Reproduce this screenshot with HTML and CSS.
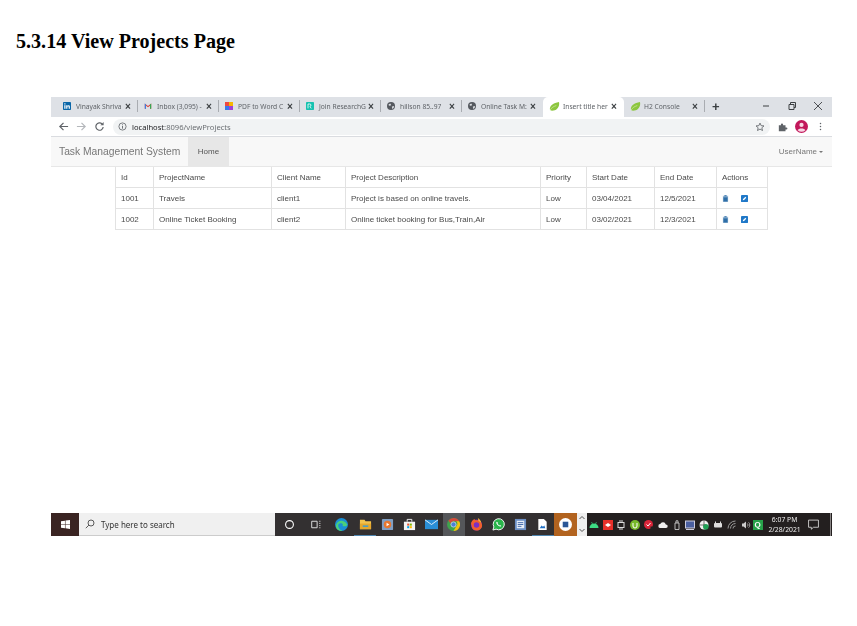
FILE: index.html

```html
<!DOCTYPE html>
<html lang="en">
<head>
  <meta charset="UTF-8" />
  <title>View Projects Page</title>
  <link rel="stylesheet" href="styles.css">
</head>
<body>
  <h1 class="page-title">5.3.14 View Projects Page</h1>

  <div class="shot">
    <div class="tabstrip">
      <div class="tab sep">
        <svg class="fav" viewBox="0 0 10 10"><rect width="10" height="10" rx="1" fill="#0a66a8"/><rect x="1.6" y="4" width="1.5" height="4.5" fill="#fff"/><rect x="1.6" y="1.6" width="1.5" height="1.5" fill="#fff"/><path d="M4 4h1.4v.7c.8-1.1 3.2-1.2 3.2 1.1v2.7H7.100V6.100c0-1.200-1.600-1.100-1.600 0v2.400H4z" fill="#fff"/></svg>
        <span class="tab-text">Vinayak Shriva</span><span class="tab-x">×</span>
      </div>
      <div class="tab sep">
        <svg class="fav" viewBox="0 0 10 10"><path d="M1 8.500V2l4 3 4-3v6.500H7.500V4.800L5 6.700 2.500 4.800v3.700z" fill="#d9423a"/><path d="M1 8.500V2l1.500 1.100v5.400z" fill="#3f7fe0"/><path d="M9 8.500V2L7.500 3.100v5.400z" fill="#35a853"/></svg>
        <span class="tab-text">Inbox (3,095) -</span><span class="tab-x">×</span>
      </div>
      <div class="tab sep">
        <svg class="fav" viewBox="0 0 10 10"><rect width="5" height="5" fill="#f0483e"/><rect x="5" width="5" height="5" fill="#f7b500"/><rect y="5" width="5" height="5" fill="#3b78e7"/><rect x="5" y="5" width="5" height="5" fill="#a23fd6"/></svg>
        <span class="tab-text">PDF to Word C</span><span class="tab-x">×</span>
      </div>
      <div class="tab sep">
        <svg class="fav" viewBox="0 0 10 10"><rect width="10" height="10" rx="1" fill="#16c2b0"/><path d="M2.500 8V2.500h2a1.500 1.500 0 0 1 .4 3L6.500 8" fill="none" stroke="#fff"/></svg>
        <span class="tab-text">Join ResearchG</span><span class="tab-x">×</span>
      </div>
      <div class="tab sep">
        <svg class="fav" viewBox="0 0 10 10"><circle cx="5" cy="5" r="5" fill="#55595f"/><path d="M2 3l2-1 1 1-1 2-2-1zM6 6l2-1 1 1-2 3z" fill="#dee1e6"/></svg>
        <span class="tab-text">hillson 85..97</span><span class="tab-x">×</span>
      </div>
      <div class="tab">
        <svg class="fav" viewBox="0 0 10 10"><circle cx="5" cy="5" r="5" fill="#55595f"/><path d="M2 3l2-1 1 1-1 2-2-1zM6 6l2-1 1 1-2 3z" fill="#dee1e6"/></svg>
        <span class="tab-text">Online Task M:</span><span class="tab-x">×</span>
      </div>
      <div class="tab active">
        <svg class="fav leaf" viewBox="0 0 12 10"><path d="M1 9C0 4 5 1 11 0c1 5-2 9-6 9.500-1.500.2-3 .1-4-.5z" fill="#8cc63f"/><path d="M1 9c2-3 4-4 7-5" stroke="#e8f3c8" stroke-width=".6" fill="none"/></svg>
        <span class="tab-text">Insert title her</span><span class="tab-x">×</span>
      </div>
      <div class="tab sep">
        <svg class="fav leaf" viewBox="0 0 12 10"><path d="M1 9C0 4 5 1 11 0c1 5-2 9-6 9.500-1.500.2-3 .1-4-.5z" fill="#8cc63f"/><path d="M1 9c2-3 4-4 7-5" stroke="#e8f3c8" stroke-width=".6" fill="none"/></svg>
        <span class="tab-text">H2 Console</span><span class="tab-x">×</span>
      </div>
      <span class="new-tab">+</span>
      <div class="win-btns">
        <svg viewBox="0 0 10 10"><path d="M2 5h6" stroke="#3c4043"/></svg>
        <svg viewBox="0 0 10 10"><path d="M2 3.500h5v5H2zM3.500 3.500V1.500h5v5H7" fill="none" stroke="#3c4043"/></svg>
        <svg viewBox="0 0 10 10"><path d="M1 1l8 8M9 1l-8 8" stroke="#3c4043" stroke-width=".9"/></svg>
      </div>
    </div>

    <div class="toolbar">
      <svg class="nav-ico" viewBox="0 0 12 12"><path d="M11 6H2M6 2L2 6l4 4" fill="none" stroke="#5f6368" stroke-width="1.300"/></svg>
      <svg class="nav-ico" viewBox="0 0 12 12"><path d="M1 6h9M6 2l4 4-4 4" fill="none" stroke="#b4b7bb" stroke-width="1.300"/></svg>
      <svg class="nav-ico" viewBox="0 0 12 12"><path d="M10 6.500A4 4 0 1 1 8.800 3.200" fill="none" stroke="#5f6368" stroke-width="1.300"/><path d="M10.500 1v3.500H7z" fill="#5f6368"/></svg>
      <div class="omnibox">
        <svg class="info-ico" viewBox="0 0 10 10"><circle cx="5" cy="5" r="4" fill="none" stroke="#5f6368" stroke-width=".9"/><path d="M5 4.400v3M5 2.600v1" stroke="#5f6368"/></svg>
        <span class="url"><b>localhost</b>:8096/viewProjects</span>
        <svg class="star-ico" viewBox="0 0 12 12"><path d="M6 1.300l1.400 3.100 3.400.3-2.600 2.200.8 3.300L6 8.500l-3 1.700.8-3.300-2.600-2.200 3.400-.3z" fill="none" stroke="#5f6368"/></svg>
      </div>
      <svg class="puzzle-ico" viewBox="0 0 12 12"><path d="M1 4h2.500V3a1.300 1.300 0 0 1 2.600 0v1H9v2.500h1a1.300 1.300 0 0 1 0 2.600H9V11H1z" fill="#5f6368"/></svg>
      <svg class="avatar-ico" viewBox="0 0 14 14"><circle cx="7" cy="7" r="7" fill="#c2185b"/><circle cx="7" cy="5.300" r="2.300" fill="#f7d7e4"/><path d="M2.800 11c1-2.400 7.400-2.400 8.400 0A6 6 0 0 1 2.800 11z" fill="#f7d7e4"/></svg>
      <svg class="menu-ico" viewBox="0 0 4 12"><circle cx="2" cy="2" r="1" fill="#5f6368"/><circle cx="2" cy="6" r="1" fill="#5f6368"/><circle cx="2" cy="10" r="1" fill="#5f6368"/></svg>
    </div>

    <nav class="navbar">
      <span class="brand">Task Management System</span>
      <span class="nav-active">Home</span>
      <span class="user">UserName<i class="caret"></i></span>
    </nav>

    <table class="projects">
      <colgroup>
        <col class="c-id"><col class="c-name"><col class="c-client"><col class="c-desc">
        <col class="c-pri"><col class="c-start"><col class="c-end"><col class="c-act">
      </colgroup>
      <thead>
        <tr><th>Id</th><th>ProjectName</th><th>Client Name</th><th>Project Description</th><th>Priority</th><th>Start Date</th><th>End Date</th><th>Actions</th></tr>
      </thead>
      <tbody>
        <tr>
          <td>1001</td><td>Travels</td><td>client1</td><td>Project is based on online travels.</td><td>Low</td><td>03/04/2021</td><td>12/5/2021</td>
          <td>
            <div class="actions">
              <svg class="act-ico" viewBox="0 0 8 8"><path d="M1 1.500h6M3 1.500V.6h2v.9M1.600 2.500h4.800V7.500H1.600z" fill="#2f6fa8" stroke="#2f6fa8" stroke-width=".6"/></svg>
              <svg class="act-ico" viewBox="0 0 8 8"><rect width="8" height="8" rx="1" fill="#1f78c8"/><path d="M2 6l.4-1.500L5 2l1 1-2.500 2.600z" fill="#fff"/></svg>
            </div>
          </td>
        </tr>
        <tr>
          <td>1002</td><td>Online Ticket Booking</td><td>client2</td><td>Online ticket booking for Bus,Train,Air</td><td>Low</td><td>03/02/2021</td><td>12/3/2021</td>
          <td>
            <div class="actions">
              <svg class="act-ico" viewBox="0 0 8 8"><path d="M1 1.500h6M3 1.500V.6h2v.9M1.600 2.500h4.800V7.500H1.600z" fill="#2f6fa8" stroke="#2f6fa8" stroke-width=".6"/></svg>
              <svg class="act-ico" viewBox="0 0 8 8"><rect width="8" height="8" rx="1" fill="#1f78c8"/><path d="M2 6l.4-1.500L5 2l1 1-2.500 2.600z" fill="#fff"/></svg>
            </div>
          </td>
        </tr>
      </tbody>
    </table>
  </div>

  <div class="taskbar">
    <div class="start">
      <svg viewBox="0 0 10 10"><path d="M0 1.400l4.400-.7v4H0zM5 .6L10 0v4.700H5zM0 5.300h4.400v4L0 8.600zM5 5.300h5V10l-5-.7z" fill="#fff"/></svg>
    </div>
    <div class="search">
      <svg viewBox="0 0 10 10"><circle cx="6" cy="4" r="3" fill="none" stroke="#333" stroke-width=".8"/><path d="M3.800 6.200L.8 9.200" stroke="#333" stroke-width=".8"/></svg>
      <span>Type here to search</span>
    </div>
    <div class="apps">
      <span class="app wide"><svg viewBox="0 0 12 12"><circle cx="6" cy="6" r="3.600" fill="none" stroke="#fff"/></svg></span>
      <span class="app wide"><svg viewBox="0 0 12 12"><path d="M2.500 3h5v6h-5zM9.500 3h1M9.500 5h1M9.500 7h1M9.500 9h1" fill="none" stroke="#ddd" stroke-width=".9"/></svg></span>
      <span class="app wide"><svg viewBox="0 0 14 14"><circle cx="7" cy="7" r="7" fill="#1a8fd6"/><path d="M1 8c1-6 9-7 12-1 .5 2-3 2.500-5 1.500 2-2-2-4-4-2C2.500 8 4 13 8 13.800 4 14.500 .8 12 1 8z" fill="#4ad07a"/></svg></span>
      <span class="app pinned"><svg viewBox="0 0 14 14"><path d="M1 2h5l1 1.500h6V12H1z" fill="#f3c24d"/><rect x="1" y="6" width="12" height="6" fill="#e6a82c"/><rect x="4" y="8" width="6" height="1.500" fill="#2f9ae0"/></svg></span>
      <span class="app"><svg viewBox="0 0 14 14"><rect x="1" y="1" width="12" height="12" rx="1" fill="#7f9fc4"/><rect x="3" y="3" width="8" height="8" rx="4" fill="#e8772e"/><path d="M6 5l3 2-3 2z" fill="#fff"/></svg></span>
      <span class="app"><svg viewBox="0 0 14 14"><path d="M1 4h12v9H1z" fill="#f4f4f4"/><path d="M4.500 4V1.500h5V4" fill="none" stroke="#f4f4f4"/><rect x="4.500" y="6" width="2.200" height="2.200" fill="#e8502f"/><rect x="7.300" y="6" width="2.200" height="2.200" fill="#7fba00"/><rect x="4.500" y="8.800" width="2.200" height="2.200" fill="#00a4ef"/><rect x="7.300" y="8.800" width="2.200" height="2.200" fill="#ffb900"/></svg></span>
      <span class="app"><svg viewBox="0 0 14 14"><rect y="2" width="14" height="10" fill="#2a8fd6"/><path d="M0 2l7 5 7-5" fill="none" stroke="#e8f3fb"/></svg></span>
      <span class="app current"><svg viewBox="0 0 14 14"><circle cx="7" cy="7" r="7" fill="#3fa34d"/><path d="M7 0a7 7 0 0 1 6.100 3.500H7a3.500 3.500 0 0 0-3.300 2.400L1.500 2.800A7 7 0 0 1 7 0z" fill="#d9483b"/><path d="M13.100 3.500A7 7 0 0 1 7 14l3-5.200a3.500 3.500 0 0 0 0-5.300z" fill="#f4c20d"/><circle cx="7" cy="7" r="2.800" fill="#4a80d8" stroke="#eee" stroke-width=".7"/></svg></span>
      <span class="app"><svg viewBox="0 0 14 14"><circle cx="7" cy="7.500" r="6" fill="#7b2fc4"/><path d="M1 7.500C1 4 3 1.500 5 1c0 1 .5 1.500 2 1.500 3 0 6 2 6 5.500 0 3-2.500 5.500-6 5.500a5.500 5.500 0 0 1-2-10.500z" fill="#f2602b"/><circle cx="7" cy="7.500" r="3" fill="#7b2fc4"/><path d="M8.500 0c2 1.500 3.500 3.500 3.500 5L9 3z" fill="#fbb13c"/></svg></span>
      <span class="app"><svg viewBox="0 0 14 14"><path d="M1 13l1-3.400A6 6 0 1 1 4.400 12z" fill="#29b44a" stroke="#fff"/><path d="M5 4c-1 1 0 3 1.500 4S9 9.500 10 8.500L8.700 7.500l-.8.500C7 7.500 6.500 7 6 6l.5-.8z" fill="#fff"/></svg></span>
      <span class="app"><svg viewBox="0 0 14 14"><rect x="1" y="1" width="12" height="12" fill="#6c8fc4"/><rect x="3" y="3" width="8" height="8" fill="#e8eef7"/><path d="M4 5h6M4 7h6M4 9h4" stroke="#3d64a6"/></svg></span>
      <span class="app pinned"><svg viewBox="0 0 14 14"><path d="M2.500 1h6l3 3v9h-9z" fill="#fff"/><path d="M4 11l2-3 1.500 1.500L9 8l1 3z" fill="#1f6fc4"/></svg></span>
      <span class="app word"><svg viewBox="0 0 14 14"><circle cx="7" cy="7" r="7" fill="#fff"/><rect x="4" y="4" width="6" height="6" fill="#2b5797"/></svg></span>
      <span class="chevrons"><svg viewBox="0 0 8 22"><path d="M1.500 6L4 3.500 6.500 6M1.500 16L4 18.500 6.500 16" fill="none" stroke="#555"/></svg></span>
    </div>
    <div class="tray">
      <span class="t-ico"><svg viewBox="0 0 10 10"><path d="M.5 8a4.500 4.500 0 0 1 9 0z" fill="#3ddc84"/><path d="M2.500 2l1 2M7.500 2l-1 2" stroke="#3ddc84" stroke-width=".6"/></svg></span>
      <span class="t-ico"><svg viewBox="0 0 10 10"><rect width="10" height="10" fill="#e8302a"/><path d="M2 5l3-2 3 2-3 2z" fill="#fff"/></svg></span>
      <span class="t-ico"><svg viewBox="0 0 10 10"><rect x="2" y="2.500" width="6" height="5" fill="none" stroke="#ddd"/><path d="M3 1h4M3 9h4" stroke="#ddd"/></svg></span>
      <span class="t-ico"><svg viewBox="0 0 10 10"><circle cx="5" cy="5" r="5" fill="#78b82a"/><path d="M3 3v3a2 2 0 0 0 4 0V3" fill="none" stroke="#fff"/></svg></span>
      <span class="t-ico"><svg viewBox="0 0 10 10"><circle cx="4.500" cy="4.500" r="4.500" fill="#d9263a"/><path d="M2.500 4.500l1.500 1.500 2.500-3" fill="none" stroke="#fff"/><rect x="6.500" y="6.500" width="3" height="3" fill="#222"/></svg></span>
      <span class="t-ico"><svg viewBox="0 0 10 10"><path d="M2.500 8a2 2 0 0 1-.3-4 3 3 0 0 1 5.600.4A1.800 1.800 0 0 1 8 8z" fill="#eee"/></svg></span>
      <span class="t-ico"><svg viewBox="0 0 10 10"><path d="M3 3h4v6.500H3zM4 3V.8h2V3" fill="none" stroke="#ddd" stroke-width=".8"/></svg></span>
      <span class="t-ico"><svg viewBox="0 0 10 10"><rect x=".5" y="1" width="9" height="7" fill="#4a5fa0" stroke="#ccd"/><path d="M1 9.500h8" stroke="#ccd"/></svg></span>
      <span class="t-ico"><svg viewBox="0 0 10 10"><circle cx="5" cy="5" r="4.500" fill="#f0f0f0"/><circle cx="6.800" cy="6.800" r="2.800" fill="#1fa055"/><path d="M5 .5v4.500H.5" stroke="#222" stroke-width=".6" fill="none"/></svg></span>
      <span class="t-ico"><svg viewBox="0 0 10 10"><rect x="1" y="3" width="8" height="4.500" rx="1" fill="#ddd"/><path d="M2.500 1.500v1.500M7.500 1.500v1.500" stroke="#ddd"/></svg></span>
      <span class="t-ico"><svg viewBox="0 0 10 10"><path d="M1 8.500A7.500 7.500 0 0 1 8.500 1M3.500 8.500a5 5 0 0 1 5-5M6 8.500A2.500 2.500 0 0 1 8.500 6" fill="none" stroke="#999"/></svg></span>
      <span class="t-ico"><svg viewBox="0 0 10 10"><path d="M1 3.500h1.500L5 1.500v7L2.500 6.500H1z" fill="#ccc"/><path d="M6.300 3.500a2 2 0 0 1 0 3M7.600 2.300a3.700 3.700 0 0 1 0 5.400" fill="none" stroke="#ccc" stroke-width=".7"/></svg></span>
      <span class="q-badge">Q</span>
      <span class="clock">6:07 PM<br>2/28/2021</span>
      <span class="notify"><svg viewBox="0 0 10 10"><path d="M.5 1h9v6.500H5L3 9.300V7.500H.5z" fill="none" stroke="#eee" stroke-width=".7"/></svg></span>
      <span class="show-desktop"></span>
    </div>
  </div>
</body>
</html>
```

FILE: styles.css

```css
body { margin: 0; background: #fff; font-family: "Liberation Sans", Arial, sans-serif; overflow: hidden; }
svg { display: block; }

.page-title { margin: 31px 0 0 16px; height: 21px; font: bold 20.100px/21px "Liberation Serif", serif; color: #000; }

/* the pasted screenshot is soft, so the whole thing gets a slight blur */
.shot { width: 781px; margin: 45px 0 0 51px; height: 416px; filter: blur(.3px); }

/* browser tabs */
.tabstrip { height: 20px; background: #dee1e6; display: flex; align-items: center; padding-left: 6px; }
.tab { width: 81px; height: 20px; flex: none; display: flex; align-items: center; padding: 0 5px 2px 6px; box-sizing: border-box; font: 6.700px "Noto Sans", sans-serif; color: #5f6368; position: relative; }
.tab.sep::after { content: ""; position: absolute; right: 0; top: 3px; height: 12px; width: 1px; background: #a9acb1; }
.tab.active { background: #fff; border-radius: 5px 5px 0 0; }
.fav { width: 8px; height: 8px; margin-right: 5px; flex: none; }
.fav.leaf { width: 11px; height: 9px; margin-right: 3px; }
.tab-text { flex: 1; white-space: nowrap; }
.tab-x { font: bold 10px "Liberation Sans", sans-serif; color: #3c4043; width: 10px; text-align: center; }
.new-tab { font: bold 13px "Liberation Sans", sans-serif; color: #3c4043; margin: 0 0 2px 7px; }
.win-btns { margin-left: auto; display: flex; gap: 16px; padding: 0 9px 2px 0; }
.win-btns svg { width: 10px; height: 10px; }

/* address bar */
.toolbar { height: 20px; display: flex; align-items: center; border-bottom: 1px solid #dadce0; box-sizing: border-box; padding-left: 7px; }
.nav-ico { width: 11px; height: 11px; margin-right: 7px; flex: none; }
.omnibox { width: 657px; height: 16px; background: #f1f3f4; border-radius: 8px; display: flex; align-items: center; padding: 0 5px; box-sizing: border-box; margin-left: 1px; }
.info-ico { width: 9px; height: 9px; margin-right: 5px; }
.url { font: 7.600px "Noto Sans", sans-serif; color: #6b6f73; }
.url b { font-weight: normal; color: #202124; }
.star-ico { width: 10px; height: 10px; margin-left: auto; }
.puzzle-ico { width: 10px; height: 10px; margin-left: 8px; }
.avatar-ico { width: 13px; height: 13px; margin-left: 7px; }
.menu-ico { width: 3px; height: 9px; margin-left: 11px; }

/* app navbar */
.navbar { height: 30px; background: #f8f8f8; border-bottom: 1px solid #e7e7e7; box-sizing: border-box; display: flex; align-items: stretch; color: #777; line-height: 30px; }
.brand { font-size: 10.300px; margin-left: 8px; }
.nav-active { background: #e7e7e7; color: #555; font-size: 8px; padding: 0 9.500px; margin-left: 8px; }
.user { margin-left: auto; margin-right: 9px; font-size: 8px; }
.caret { display: inline-block; margin-left: 2px; vertical-align: middle; border-top: 2.500px solid #777; border-left: 2.500px solid transparent; border-right: 2.500px solid transparent; }

/* table */
.projects { border-collapse: separate; border-spacing: 0; table-layout: fixed; width: 653px; margin: 0 0 0 64px; font-size: 8px; color: #4a4a4a; }
.c-id { width: 39px; }
.c-name { width: 118px; }
.c-client { width: 74px; }
.c-desc { width: 195px; }
.c-pri { width: 46px; }
.c-start { width: 68px; }
.c-end { width: 62px; }
.c-act { width: 51px; }
.projects th, .projects td { border-right: 1px solid #e2e2e2; border-bottom: 1px solid #e2e2e2; height: 21px; padding: 0 0 0 5px; box-sizing: border-box; text-align: left; font-weight: normal; white-space: nowrap; }
.projects th:first-child, .projects td:first-child { border-left: 1px solid #e2e2e2; }
.actions { display: flex; gap: 12px; }
.act-ico { width: 7px; height: 7px; }

/* windows taskbar */
.taskbar { width: 781px; height: 23px; margin-left: 51px; display: flex; background: #2e2a2a; filter: blur(.3px); }
.start { width: 28px; background: #3a2422; display: flex; align-items: center; justify-content: center; }
.start svg { width: 9px; height: 9px; }
.search { width: 196px; background: #f0f0f0; border-bottom: 1px solid #ccc; box-sizing: border-box; display: flex; align-items: center; padding-left: 6px; font: 8px "Noto Sans", sans-serif; color: #333; }
.search svg { width: 10px; height: 10px; margin-right: 6px; }
.apps { display: flex; align-items: stretch; padding-left: 1px; width: 312px; box-sizing: border-box; background: #333031; }
.app { width: 22.200px; flex: none; display: flex; align-items: center; justify-content: center; box-sizing: border-box; }
.app.wide { width: 26px; }
.app svg { width: 13px; height: 13px; }
.pinned { border-bottom: 1px solid #4f86b0; }
.current { background: #55575a; }
.app.word { background: #b2631f; width: 23px; }
.chevrons { width: 10px; background: #efefef; flex: none; }
.chevrons svg { width: 8px; height: 22px; margin: 0 auto; }
.tray { flex: 1; display: flex; align-items: center; background: #231f1f; color: #eee; }
.t-ico { width: 13.800px; flex: none; display: flex; justify-content: center; }
.t-ico svg { width: 10px; height: 10px; }
.q-badge { width: 10px; height: 10px; background: #27a24a; color: #fff; font: bold 8px/10px "Liberation Sans", sans-serif; text-align: center; }
.clock { width: 38px; margin-left: 3px; text-align: center; font: 6.800px/10px "Noto Sans", sans-serif; }
.notify { margin-left: 4px; }
.notify svg { width: 11px; height: 11px; }
.show-desktop { width: 1px; height: 100%; background: #8a8686; margin: 0 1px 0 auto; }
```
